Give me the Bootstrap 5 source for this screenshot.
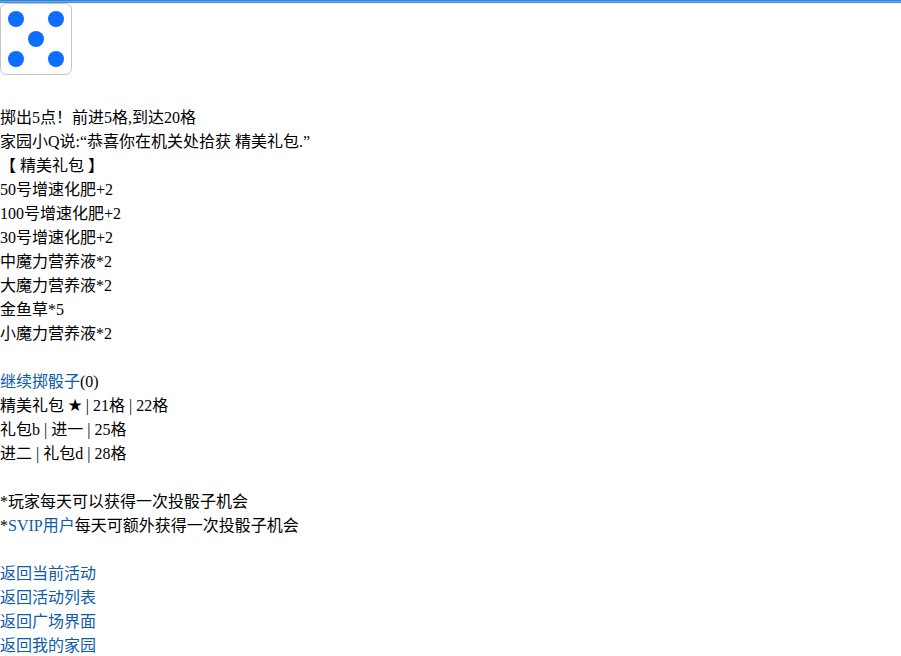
<!DOCTYPE html>
<html lang="zh">
<head>
<meta charset="utf-8">
<title>掷骰子</title>
<link href="https://cdn.jsdelivr.net/npm/bootstrap@5.3.0/dist/css/bootstrap.min.css" rel="stylesheet">
<style>
html, body { height: 656px; overflow: hidden; }
body { font-family: "Liberation Serif", "Noto Sans CJK SC", serif; font-size: 16px; line-height: 24px; color: #000; background: #fff; }
.top-strip { height: 3px; background: linear-gradient(#2f80d8 0 1px, #62aef5 1px 2px, #3f8fe0 2px 3px); }
.die-face { display: block; width: 72px; height: 72px; margin-bottom: 31px; }
.game-link { color: #0d5bab; text-decoration: none; }
.blank-line { height: 24px; }
.star-glyph { font-family: "DejaVu Sans", sans-serif; font-size: 17px; line-height: 0; letter-spacing: -1.5px; margin-left: -.5px; margin-right: .5px; }
</style>
</head>
<body>
<div class="top-strip"></div>
<main>
<svg class="die-face" viewBox="0 0 72 72" aria-label="骰子5点">
<rect x=".5" y=".5" width="71" height="71" rx="6" fill="#fff" stroke="#c4c4c4"/>
<circle cx="16" cy="16" r="8" fill="#0d6efd"/><circle cx="56" cy="16" r="8" fill="#0d6efd"/>
<circle cx="36" cy="36" r="8" fill="#0d6efd"/>
<circle cx="16" cy="56" r="8" fill="#0d6efd"/><circle cx="56" cy="56" r="8" fill="#0d6efd"/>
</svg>
<div>掷出5点！前进5格,到达20格</div>
<div>家园小Q说:“恭喜你在机关处拾获 精美礼包.”</div>
<div>【 精美礼包 】</div>
<div>50号增速化肥+2</div>
<div>100号增速化肥+2</div>
<div>30号增速化肥+2</div>
<div>中魔力营养液*2</div>
<div>大魔力营养液*2</div>
<div>金鱼草*5</div>
<div>小魔力营养液*2</div>
<div class="blank-line"></div>
<div><a class="game-link" href="#">继续掷骰子</a>(0)</div>
<div>精美礼包 <span class="star-glyph">★</span> | 21格 | 22格</div>
<div>礼包b | 进一 | 25格</div>
<div>进二 | 礼包d | 28格</div>
<div class="blank-line"></div>
<div>*玩家每天可以获得一次投骰子机会</div>
<div>*<a class="game-link" href="#">SVIP用户</a>每天可额外获得一次投骰子机会</div>
<div class="blank-line"></div>
<div><a class="game-link" href="#">返回当前活动</a></div>
<div><a class="game-link" href="#">返回活动列表</a></div>
<div><a class="game-link" href="#">返回广场界面</a></div>
<div><a class="game-link" href="#">返回我的家园</a></div>
</main>
<script src="https://cdn.jsdelivr.net/npm/bootstrap@5.3.0/dist/js/bootstrap.bundle.min.js"></script>
</body>
</html>
